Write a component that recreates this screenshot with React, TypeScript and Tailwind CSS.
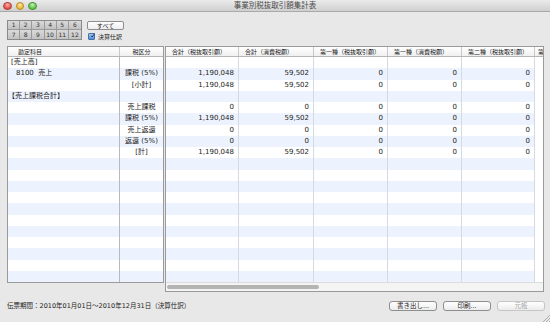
const font = "font-['DejaVu_Sans','Noto_Sans_CJK_JP',sans-serif]";

type Row = { a?: string; indent?: boolean; b?: string; v?: string[] };

const sum = ["1,190,048", "59,502", "0", "0", "0"];
const zero = ["0", "0", "0", "0", "0"];

const rows: Row[] = [
  { a: "[売上高]" },
  { a: "8100  売上", indent: true, b: "課税 (5%)", v: sum },
  { b: "[小計]", v: sum },
  { a: "【売上課税合計】" },
  { b: "売上課税", v: zero },
  { b: "課税 (5%)", v: sum },
  { b: "売上返還", v: zero },
  { b: "返還 (5%)", v: zero },
  { b: "[計]", v: sum },
  ...Array.from({ length: 11 }, () => ({})),
];

const cols = [
  { title: "合計（税抜取引額）", w: "w-[73px]" },
  { title: "合計（消費税額）", w: "w-[75px]" },
  { title: "第一種（税抜取引額）", w: "w-[74px]" },
  { title: "第一種（消費税額）", w: "w-[74px]" },
  { title: "第二種（税抜取引額）", w: "w-[73px]" },
];

function TrafficLights() {
  return (
    <div className="absolute left-[3px] top-[1.5px] flex gap-[4px]">
      <span className="h-[8.5px] w-[8.5px] rounded-full border border-[#b0433f] bg-[radial-gradient(circle_at_50%_30%,#ffb3ad,#e2463f_70%)]" />
      <span className="h-[8.5px] w-[8.5px] rounded-full border border-[#b78a25] bg-[radial-gradient(circle_at_50%_30%,#ffe7a8,#f2b52f_70%)]" />
      <span className="h-[8.5px] w-[8.5px] rounded-full border border-[#4a9339] bg-[radial-gradient(circle_at_50%_30%,#c4f3b3,#5cbf45_70%)]" />
    </div>
  );
}

function MonthGrid() {
  const months = Array.from({ length: 12 }, (_, i) => i + 1);
  return (
    <div className="grid h-[20px] w-[75px] grid-cols-6 grid-rows-2 border border-[#8a8a8a] bg-[#c6c6c6]">
      {months.map((m, i) => (
        <div
          key={m}
          className={`flex items-center justify-center bg-gradient-to-b from-[#dadada] to-[#c2c2c2] text-[6px] leading-none text-[#333] ${
            i % 6 !== 5 ? "border-r border-[#9a9a9a]" : ""
          } ${i < 6 ? "border-b border-[#9a9a9a]" : ""}`}
        >
          {m}
        </div>
      ))}
    </div>
  );
}

function Checkbox() {
  return (
    <span className="flex h-[7px] w-[7px] items-center justify-center rounded-[1px] border border-[#4a6fa5] bg-gradient-to-b from-[#a9cbf3] to-[#4b8ee0]">
      <svg viewBox="0 0 10 10" className="h-[9px] w-[9px] -translate-y-[1px] translate-x-[1px]">
        <path d="M2 5 L4.5 8 L9 1" fill="none" stroke="#10233f" strokeWidth="1.6" />
      </svg>
    </span>
  );
}

function Button({ children, disabled }: { children: React.ReactNode; disabled?: boolean }) {
  return (
    <button
      className={`flex h-[10px] w-[48px] items-center justify-center rounded-[3px] border bg-gradient-to-b from-[#ffffff] to-[#ececec] text-[6.5px] leading-none ${
        disabled ? "border-[#c6c6c6] text-[#a8a8a8]" : "border-[#8e8e8e] text-[#222]"
      }`}
    >
      {children}
    </button>
  );
}

export default function App() {
  return (
    <div className={`relative flex h-[322px] w-[550px] flex-col overflow-hidden bg-[#e8e8e8] text-[#1c1c1c] ${font}`}>
      {/* title bar */}
      <div className="relative flex h-[12px] items-center justify-center border-b border-[#a9a9a9] bg-gradient-to-b from-[#ebebeb] to-[#cfcfcf]">
        <TrafficLights />
        <span className="text-[7.5px] leading-none text-[#4a4a4a]">事業別税抜取引額集計表</span>
      </div>

      {/* controls */}
      <div className="flex gap-[5px] pl-[7px] pt-[8px]">
        <MonthGrid />
        <div className="flex flex-col gap-[2px] pt-[1px]">
          <button className="flex h-[9px] w-[37px] items-center justify-center rounded-[2px] border border-[#8e8e8e] bg-gradient-to-b from-white to-[#ededed] text-[6px] leading-none">
            すべて
          </button>
          <div className="flex items-center gap-[3px] pl-[1px] pt-[1px]">
            <Checkbox />
            <span className="text-[6px] leading-none">決算仕訳</span>
          </div>
        </div>
      </div>

      {/* tables */}
      <div className="mt-[6px] flex items-start pl-[7px]">
        {/* left panel */}
        <div className="w-[157px] border border-[#9a9a9a] bg-white">
          <div className="flex h-[10px] border-b border-[#b5b5b5] bg-gradient-to-b from-white to-[#f0f0f0] text-[6px] leading-none">
            <div className="flex w-[112px] items-center border-r border-[#c8c8c8] pl-[10px]">勘定科目</div>
            <div className="flex flex-1 items-center justify-center">税区分</div>
          </div>
          {rows.map((r, i) => (
            <div
              key={i}
              className={`flex h-[11.25px] text-[7px] leading-none ${i % 2 === 1 ? "bg-[#edf3fe]" : "bg-white"}`}
            >
              <div
                className={`flex w-[112px] items-center whitespace-pre border-r border-[#b9b9b9] ${
                  r.indent ? "pl-[8px]" : r.a?.startsWith("【") ? "pl-0" : "pl-[3px]"
                }`}
              >
                {r.a}
              </div>
              <div className="flex flex-1 items-center justify-center">{r.b}</div>
            </div>
          ))}
        </div>

        {/* right panel */}
        <div className="ml-[1px] w-[379px] border border-[#9a9a9a] bg-white">
          <div className="flex h-[10px] border-b border-[#b5b5b5] bg-gradient-to-b from-white to-[#f0f0f0] text-[6px] leading-none">
            {cols.map((c) => (
              <div key={c.title} className={`${c.w} flex items-center border-r border-[#c8c8c8] pl-[6px]`}>
                {c.title}
              </div>
            ))}
            <div className="flex flex-1 items-center overflow-hidden pl-[3px]">第</div>
          </div>
          {rows.map((r, i) => (
            <div key={i} className="flex h-[11.25px] text-[7px] leading-none">
              {cols.map((c, j) => (
                <div
                  key={j}
                  className={`${c.w} flex items-center justify-end border-r border-[#d5d9e2] pr-[4px] ${
                    i % 2 === 1 ? "bg-[#edf3fe]" : "bg-white"
                  }`}
                >
                  {r.v?.[j]}
                </div>
              ))}
              <div className="flex-1 bg-white" />
            </div>
          ))}
          <div className="flex h-[9px] items-center border-t border-[#dcdcdc] bg-[#f4f4f4] pl-[1px]">
            <div className="h-[4px] w-[152px] rounded-full bg-[#b4b4b4]" />
          </div>
        </div>
      </div>

      {/* footer */}
      <div className="flex flex-1 items-center justify-between pb-[2px] pl-[7px] pr-[5px]">
        <span className="text-[6.5px] leading-none">伝票期間：2010年01月01日〜2010年12月31日（決算仕訳）</span>
        <div className="flex gap-[6px]">
          <Button>書き出し...</Button>
          <Button>印刷...</Button>
          <Button disabled>元帳</Button>
        </div>
      </div>

      {/* resize grip */}
      <svg viewBox="0 0 10 10" className="absolute bottom-0 right-0 h-[10px] w-[10px]">
        <path d="M3 10 L10 3 M6 10 L10 6 M9 10 L10 9" stroke="#9c9c9c" strokeWidth="0.8" />
      </svg>
    </div>
  );
}
